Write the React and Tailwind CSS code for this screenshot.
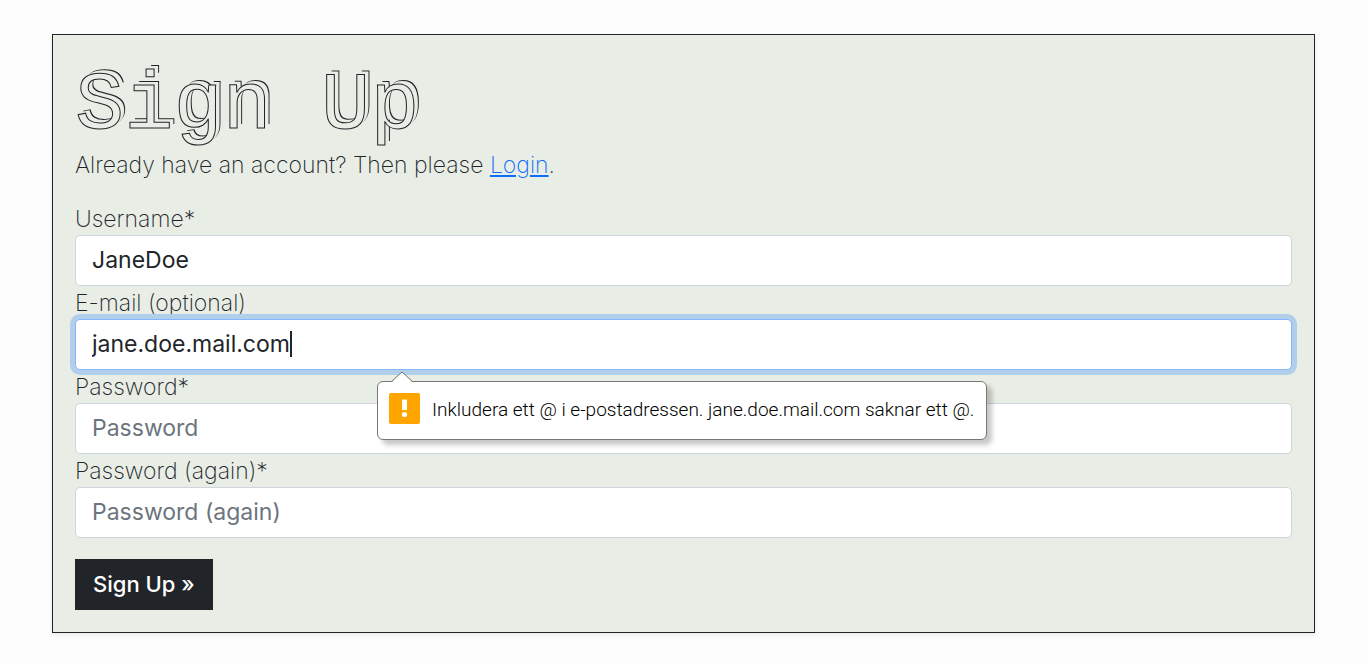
import React from 'react';

const fieldClass =
  'block h-[51px] w-full rounded-[5px] border bg-white px-4 pb-0.5 text-[23px] font-normal text-[#212529] outline-none placeholder:text-[#6c757d] placeholder:opacity-100';

function Field({ id, label, active = false, children, ...props }) {
  return (
    <div>
      <label htmlFor={id} className="block h-[33px] text-[23px] leading-[35px] font-extralight">
        {label}
      </label>
      <div className="relative">
        <input
          id={id}
          name={id}
          className={
            active
              ? `${fieldClass} border-[#86b7fe] shadow-[0_0_0_5px_#b1cfeb]`
              : `${fieldClass} border-[#ced4da]`
          }
          {...props}
        />
        {children}
      </div>
    </div>
  );
}

function ValidationBubble() {
  return (
    <div
      role="alert"
      className="absolute top-[62px] left-[302px] z-10 flex h-[59px] items-center gap-3 rounded-md border border-[#777] bg-white pr-3 pb-1 pl-[11px] whitespace-nowrap shadow-[5px_5px_5px_rgba(0,0,0,0.22)]"
    >
      <svg className="absolute -top-[11px] left-3" width="24" height="12" viewBox="0 0 24 12" aria-hidden="true">
        <path d="M1 12 12 1 23 12Z" fill="#fff" />
        <path d="M1 11 12 1 23 11" fill="none" stroke="#777" />
      </svg>
      <svg width="31" height="31" viewBox="0 0 31 31" aria-hidden="true">
        <rect width="31" height="31" rx="2" fill="#ffa500" />
        <path d="M13 6.5h5v10.5h-5z" fill="#fff" />
        <circle cx="15.5" cy="21.5" r="2.6" fill="#fff" />
      </svg>
      <span className="pt-1 font-['Roboto','Noto_Sans',sans-serif] text-[19px] font-light text-black">
        Inkludera ett @ i e-postadressen. jane.doe.mail.com saknar ett @.
      </span>
    </div>
  );
}

export default function App() {
  return (
    <main className="min-h-screen bg-[#fdfdfd] py-[34px] pr-[53px] pl-[52px] font-['Inter','Liberation_Sans',sans-serif] text-[#212529]">
      <section className="border border-[#212529] bg-[#e8ede5] p-[22px] shadow-[0_2px_5px_rgba(0,0,0,0.08)]">
        <h1 className="h-[92px] pt-1 font-['Liberation_Mono',monospace] text-[82px] leading-[92px] font-normal text-[#e8ede5] [-webkit-text-stroke:1px_#212529] [text-shadow:4px_-3px_0_#e8ede5,5px_-4px_0_#212529]">
          Sign Up
        </h1>
        <p className="text-[23px] leading-[33px] font-extralight">
          Already have an account? Then please{' '}
          <a href="#login" className="text-[#0d6efd] underline">
            Login
          </a>
          .
        </p>
        <form className="mt-5" noValidate onSubmit={(e) => e.preventDefault()}>
          <Field id="username" label="Username*" type="text" defaultValue="JaneDoe" />
          <Field id="email" label="E-mail (optional)" type="email" defaultValue="jane.doe.mail.com" active>
            <span aria-hidden="true" className="absolute top-3 left-[215px] h-[26px] w-0.5 bg-[#212529]" />
            <ValidationBubble />
          </Field>
          <Field id="password1" label="Password*" type="password" placeholder="Password" />
          <Field id="password2" label="Password (again)*" type="password" placeholder="Password (again)" />
          <button type="submit" className="mt-[21px] h-[51px] bg-[#212529] px-[18px] text-[22px] font-medium text-white">
            Sign Up »
          </button>
        </form>
      </section>
    </main>
  );
}
